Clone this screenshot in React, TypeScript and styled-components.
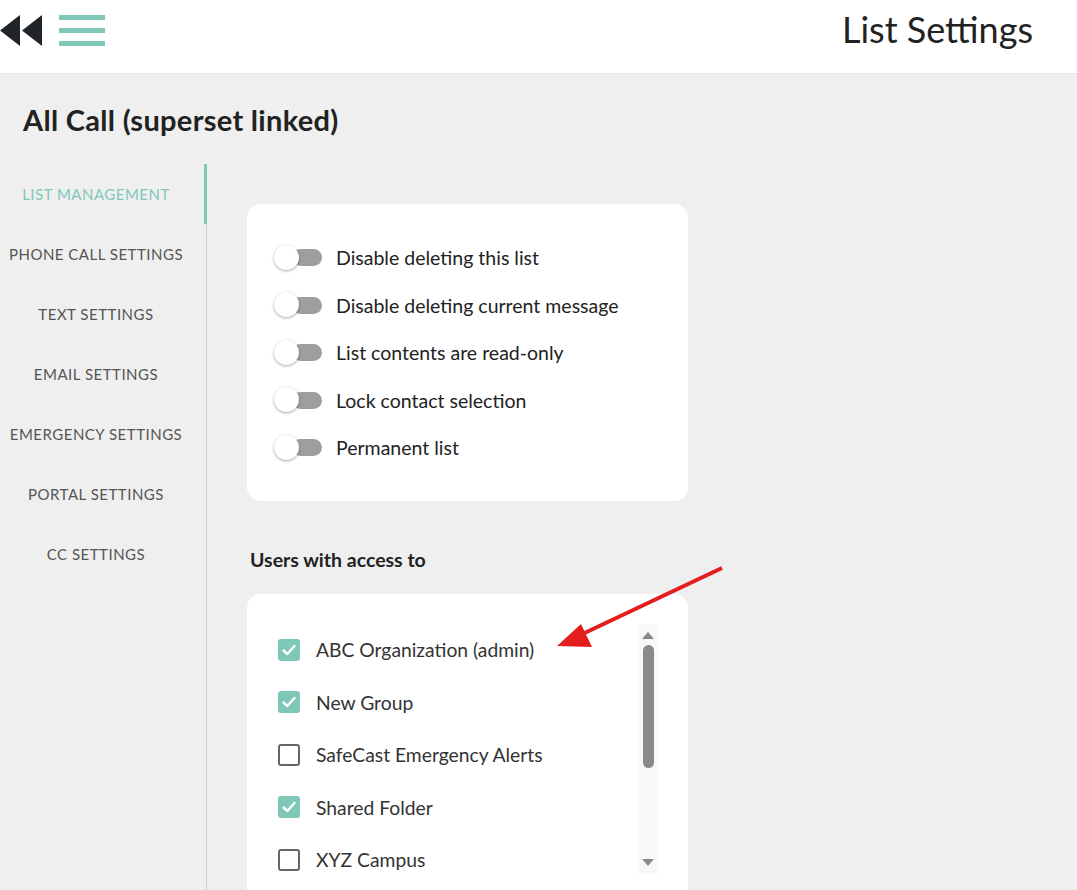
import React from 'react';
import styled, {createGlobalStyle} from 'styled-components';

const teal = '#7fc8b8';

const GlobalStyle = createGlobalStyle`
  html, body {
    margin: 0;
    padding: 0;
    background: #efefef;
    font-family: Lato, "Open Sans", sans-serif;
    color: #222;
  }
  * { box-sizing: border-box; }
`

const Page = styled.div`
  min-height: 100vh;
  display: flex;
  flex-direction: column;
  position: relative;
  overflow: hidden;
`

const Header = styled.header`
  height: 74px;
  background: #fff;
  border-bottom: 1px solid #e6e6e6;
  display: flex;
  align-items: center;
  justify-content: space-between;
  padding: 0 44px 12px 0;
`

const HeaderLeft = styled.div`
  display: flex;
  align-items: center;
  gap: 16px;
`

const Burger = styled.div`
  width: 46px;
  display: flex;
  flex-direction: column;
  gap: 8px;
  span {
    display: block;
    height: 5px;
    background: ${teal};
  }
`

const PageTitle = styled.h1`
  margin: 0 0 4px;
  font-weight: 400;
  font-size: 36px;
  color: #222;
`

const Body = styled.div`
  flex: 1;
  display: flex;
  flex-direction: column;
`

const ListTitle = styled.h2`
  margin: 0;
  padding: 28px 0 27px 23px;
  font-size: 29px;
  letter-spacing: 0.3px;
  font-weight: 700;
  color: #222;
`

const Columns = styled.div`
  flex: 1;
  display: flex;
`

const Sidebar = styled.nav`
  width: 207px;
  border-right: 1px solid #d3d3d3;
  display: flex;
  flex-direction: column;
`

const NavItem = styled.div<{ $active?: boolean }>`
  position: relative;
  height: 60px;
  display: flex;
  align-items: center;
  justify-content: center;
  padding-right: 14px;
  font-size: 15px;
  letter-spacing: 0.5px;
  color: ${p => p.$active ? teal : '#555'};
  &::after {
    content: '';
    position: absolute;
    top: 0;
    right: -1px;
    width: 3px;
    height: 100%;
    background: ${p => p.$active ? teal : 'transparent'};
  }
`

const Content = styled.main`
  padding: 40px 0 0 40px;
  display: flex;
  flex-direction: column;
`

const Card = styled.section`
  width: 441px;
  background: #fff;
  border-radius: 14px;
`

const ToggleCard = styled(Card)`
  padding: 30px 27px 29px;
`

const ToggleRow = styled.div`
  height: 47.5px;
  display: flex;
  align-items: center;
  gap: 14px;
  font-size: 19.5px;
  color: #222;
`

const Switch = styled.div`
  position: relative;
  width: 48px;
  height: 26px;
  flex-shrink: 0;
  display: flex;
  align-items: center;
  justify-content: flex-end;
`

const Track = styled.span`
  width: 30px;
  height: 17px;
  border-radius: 9px;
  background: #9e9e9e;
`

const Thumb = styled.span`
  position: absolute;
  left: 0;
  top: 0;
  width: 25px;
  height: 25px;
  border-radius: 50%;
  background: #fff;
  box-shadow: 0 1px 3px rgba(0, 0, 0, 0.35);
`

const SectionLabel = styled.h3`
  margin: 47px 0 23px 3px;
  font-size: 19.5px;
  font-weight: 700;
  color: #222;
`

const AccessCard = styled(Card)`
  padding: 30px 31px 40px;
  display: flex;
  gap: 8px;
`

const List = styled.div`
  flex: 1;
  height: 250px;
  overflow: hidden;
`

const CheckRow = styled.div`
  height: 52.5px;
  display: flex;
  align-items: center;
  gap: 16px;
  font-size: 19.3px;
  color: #333;
`

const Box = styled.span<{ $checked?: boolean }>`
  width: 22px;
  height: 22px;
  border-radius: 3px;
  flex-shrink: 0;
  display: flex;
  align-items: center;
  justify-content: center;
  background: ${p => p.$checked ? teal : '#fff'};
  border: ${p => p.$checked ? 'none' : '2px solid #666'};
`

const ScrollBar = styled.div`
  width: 18px;
  height: 250px;
  background: #f8f8f8;
  display: flex;
  flex-direction: column;
  align-items: center;
  padding: 8px 0 8px;
`

const ScrollArrow = styled.span<{ $down?: boolean }>`
  width: 0;
  height: 0;
  border-left: 6px solid transparent;
  border-right: 6px solid transparent;
  ${p => p.$down ? 'border-top: 7px solid #8a8a8a;' : 'border-bottom: 7px solid #8a8a8a;'}
`

const ScrollTrack = styled.div`
  flex: 1;
  width: 100%;
  padding: 6px 3px;
  display: flex;
  flex-direction: column;
`

const ScrollThumb = styled.div`
  width: 11px;
  height: 123px;
  border-radius: 6px;
  background: #8a8a8a;
  margin: 0 auto;
`

const Annotation = styled.svg`
  position: absolute;
  left: 550px;
  top: 560px;
  pointer-events: none;
`

const toggles = [
    'Disable deleting this list',
    'Disable deleting current message',
    'List contents are read-only',
    'Lock contact selection',
    'Permanent list',
]

const groups = [
    {name: 'ABC Organization (admin)', checked: true},
    {name: 'New Group', checked: true},
    {name: 'SafeCast Emergency Alerts', checked: false},
    {name: 'Shared Folder', checked: true},
    {name: 'XYZ Campus', checked: false},
]

const navItems = [
    'LIST MANAGEMENT',
    'PHONE CALL SETTINGS',
    'TEXT SETTINGS',
    'EMAIL SETTINGS',
    'EMERGENCY SETTINGS',
    'PORTAL SETTINGS',
    'CC SETTINGS',
]

const BackIcon = () => (
    <svg width="43" height="31" viewBox="0 0 43 31">
        <polygon points="20,0 20,31 0,15.5" fill="#212529"/>
        <polygon points="42,0 42,31 22,15.5" fill="#212529"/>
    </svg>
)

const Check = () => (
    <svg width="16" height="16" viewBox="0 0 16 16">
        <path d="M2.5 8.5 L6.3 12 L13.5 4" fill="none" stroke="#fff" strokeWidth="2.4"
              strokeLinecap="round" strokeLinejoin="round"/>
    </svg>
)

export default function App() {
    return (
        <Page>
            <GlobalStyle/>
            <Header>
                <HeaderLeft>
                    <BackIcon/>
                    <Burger><span/><span/><span/></Burger>
                </HeaderLeft>
                <PageTitle>List Settings</PageTitle>
            </Header>
            <Body>
                <ListTitle>All Call (superset linked)</ListTitle>
                <Columns>
                    <Sidebar>
                        {navItems.map((n, i) => (
                            <NavItem key={n} $active={i === 0}>{n}</NavItem>
                        ))}
                    </Sidebar>
                    <Content>
                        <ToggleCard>
                            {toggles.map(t => (
                                <ToggleRow key={t}>
                                    <Switch><Track/><Thumb/></Switch>
                                    {t}
                                </ToggleRow>
                            ))}
                        </ToggleCard>
                        <SectionLabel>Users with access to</SectionLabel>
                        <AccessCard>
                            <List>
                                {groups.map(g => (
                                    <CheckRow key={g.name}>
                                        <Box $checked={g.checked}>{g.checked && <Check/>}</Box>
                                        {g.name}
                                    </CheckRow>
                                ))}
                            </List>
                            <ScrollBar>
                                <ScrollArrow/>
                                <ScrollTrack><ScrollThumb/></ScrollTrack>
                                <ScrollArrow $down/>
                            </ScrollBar>
                        </AccessCard>
                    </Content>
                </Columns>
            </Body>
            <Annotation width="180" height="100" viewBox="0 0 180 100">
                <line x1="172" y1="8" x2="24" y2="78" stroke="#e41e1e" strokeWidth="4"/>
                <polygon points="7,86 31,64 42,87" fill="#e41e1e"/>
            </Annotation>
        </Page>
    )
}
